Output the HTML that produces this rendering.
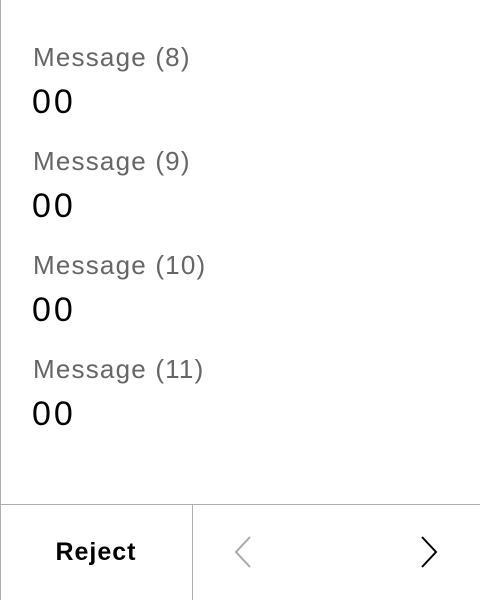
<!DOCTYPE html>
<html><head><style>
body{margin:0;width:480px;height:600px;background:#fff;font-family:"Liberation Sans",sans-serif;position:relative;overflow:hidden}
.lb{position:absolute;left:0;top:0;width:1px;height:600px;background:#b0b0b0}
.l{position:absolute;left:33px;font-size:26px;letter-spacing:1.2px;color:#666;line-height:1}
.v{position:absolute;left:32px;font-size:34px;letter-spacing:3px;color:#000;line-height:1}
.h{position:absolute;left:0;top:504px;width:480px;height:1px;background:#b0b0b0}
.vl{position:absolute;left:192px;top:504px;width:1px;height:96px;background:#b0b0b0}
.r{position:absolute;left:0;width:192px;top:540px;text-align:center;font-size:25px;letter-spacing:1px;font-weight:bold;line-height:1}
</style></head><body>
<div class="lb"></div>
<div class="l" style="top:44px">Message (8)</div><div class="v" style="top:85px">00</div>
<div class="l" style="top:148px">Message (9)</div><div class="v" style="top:189px">00</div>
<div class="l" style="top:252px">Message (10)</div><div class="v" style="top:293px">00</div>
<div class="l" style="top:356px">Message (11)</div><div class="v" style="top:397px">00</div>
<div class="h"></div><div class="vl"></div>
<div class="r">Reject</div>
<svg style="position:absolute;left:230px;top:534px" width="26" height="36"><path d="M20 3 L6 18 L20 33" stroke="#aaa" stroke-width="2" fill="none"/></svg>
<svg style="position:absolute;left:416px;top:534px" width="26" height="36"><path d="M6 3 L20 18 L6 33" stroke="#000" stroke-width="2" fill="none"/></svg>
</body></html>
